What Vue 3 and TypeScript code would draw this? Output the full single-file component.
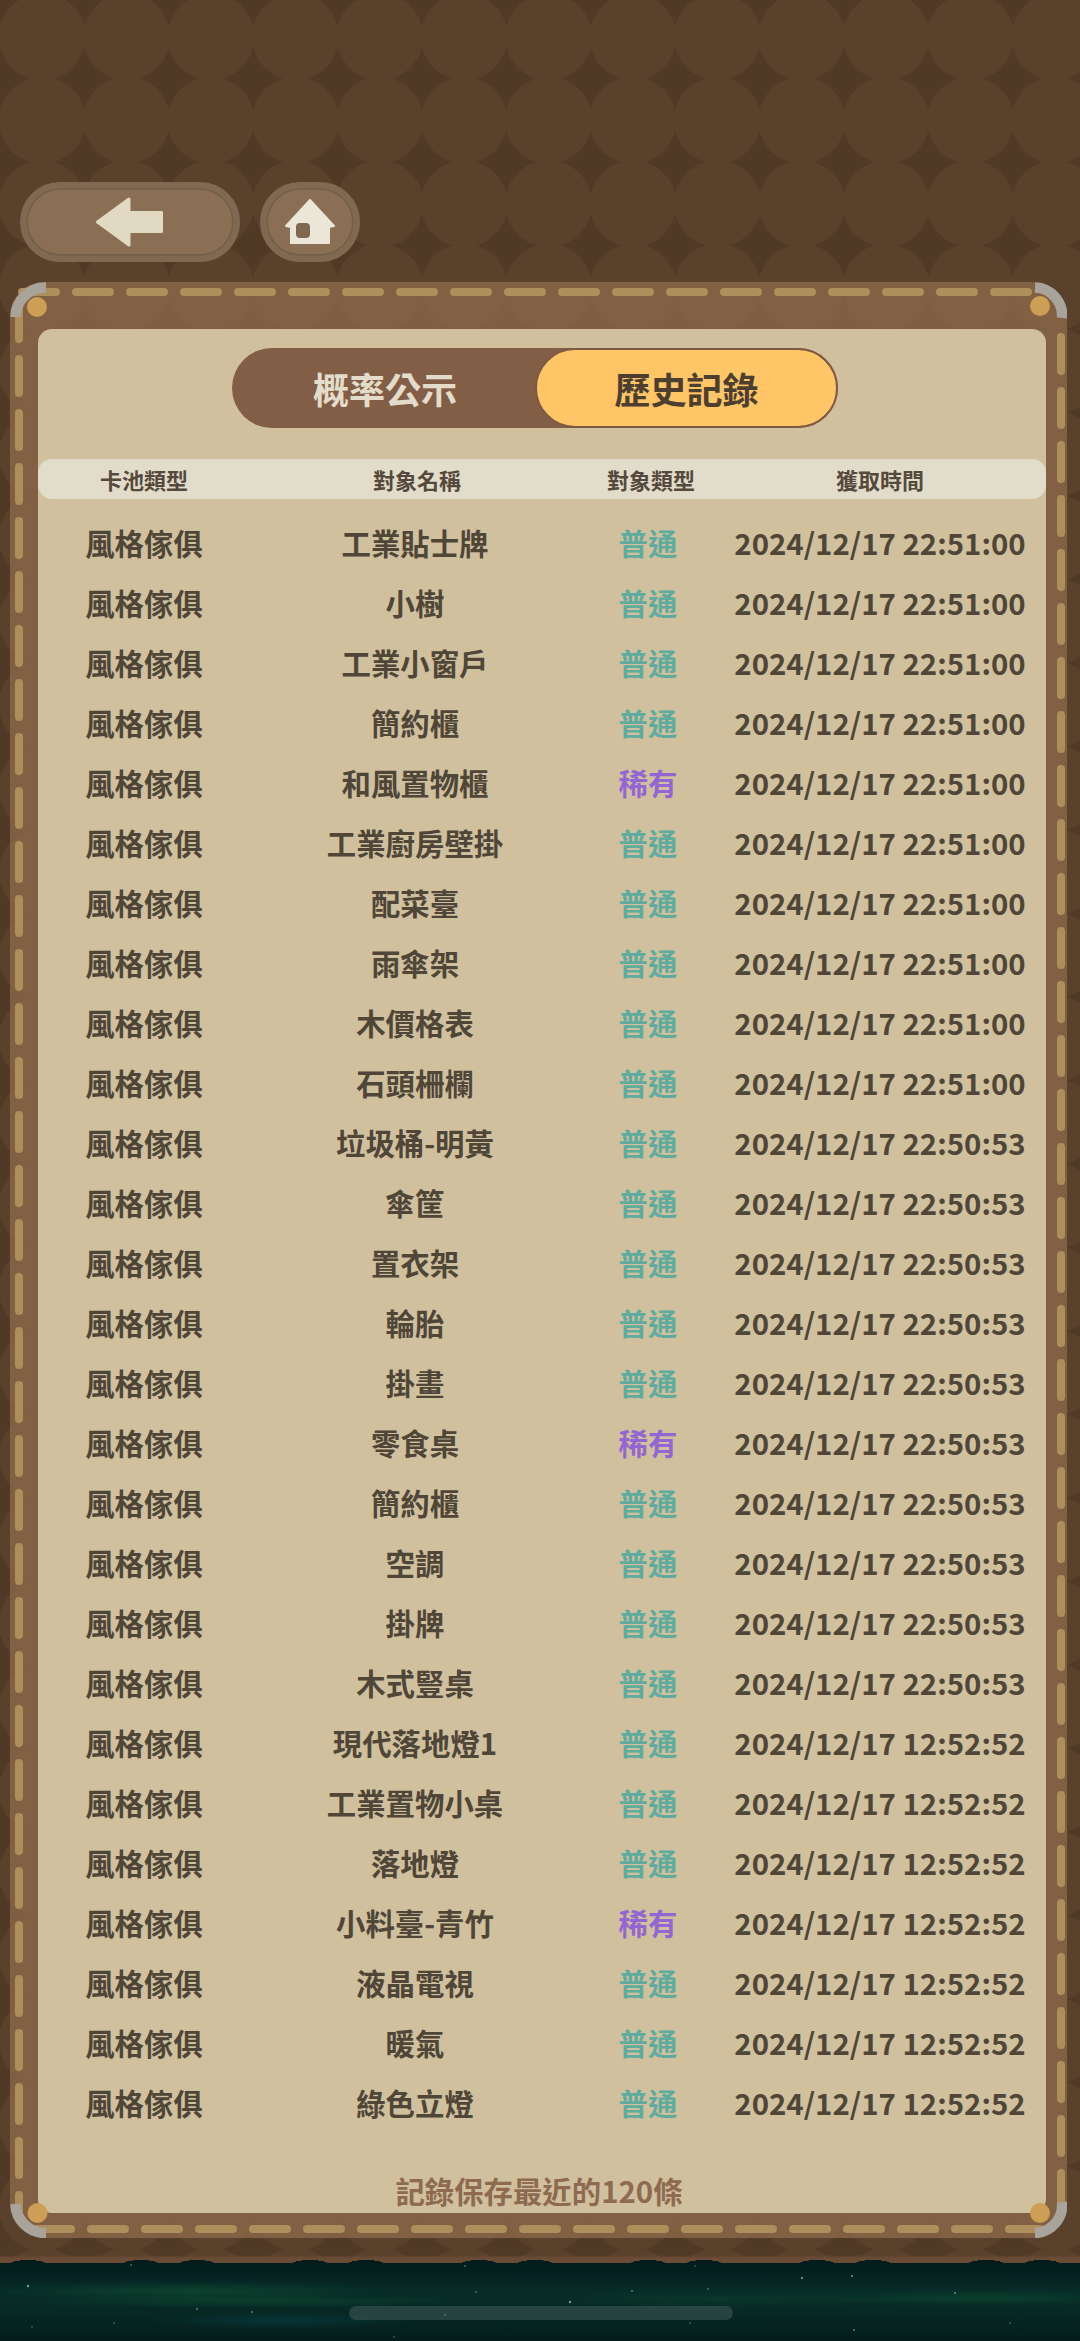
<template>
  <div class="page">
    <div class="wood">
      <div class="nav">
        <button class="nav-btn back">
          <svg width="70" height="52" viewBox="95 195 70 52">
            <path d="M129 198 L97.5 221 L129 244 Z M129 211.500 H161.500 V230.500 H129 Z" fill="#e2d9c3" stroke="#e2d9c3" stroke-width="3" stroke-linejoin="round" />
          </svg>
        </button>
        <button class="nav-btn home">
          <svg width="52" height="46" viewBox="283 198 52 46">
            <path d="M309 199 L333 225 L328 226 V242 H290 V226 L285 225 Z" fill="#ebe6d8" stroke="#ebe6d8" stroke-width="2" stroke-linejoin="round" />
            <rect x="295" y="222" width="14" height="15" rx="4" fill="#7e6850" />
          </svg>
        </button>
      </div>

      <div class="frame">
        <div class="panel">
          <div class="tabs">
            <div class="tab first">概率公示</div>
            <div class="tab active">歷史記錄</div>
          </div>
          <div class="grid header">
            <span>卡池類型</span>
            <span>對象名稱</span>
            <span>對象類型</span>
            <span>獲取時間</span>
          </div>
          <div class="rows">
            <div v-for="(row, index) in rows" :key="index" class="grid row">
              <span>風格傢俱</span>
              <span>{{ row.name }}</span>
              <span :class="row.rare ? 'rare' : 'common'">{{ row.rare ? '稀有' : '普通' }}</span>
              <span>{{ row.time }}</span>
            </div>
          </div>
          <div class="foot">記錄保存最近的120條</div>
        </div>

        <!-- stitching and metal corners sit over the frame edge -->
        <svg class="trim" width="1057" height="1956" viewBox="10 282 1057 1956">
          <g stroke="#ae8f5b" stroke-width="8" stroke-linecap="round" stroke-dasharray="34 20" fill="none">
            <line x1="22" y1="292" x2="1028" y2="292" />
            <line x1="37" y1="2229" x2="1040" y2="2229" />
            <line x1="19" y1="305" x2="19" y2="2210" />
            <line x1="1061" y1="337" x2="1061" y2="2207" />
          </g>
          <g fill="#cd9e55">
            <circle cx="37" cy="307" r="10" />
            <circle cx="1040" cy="306" r="10" />
            <circle cx="37.500" cy="2213" r="10" />
            <circle cx="1040" cy="2213" r="10" />
          </g>
          <g stroke="#a8a49c" stroke-width="10.500" fill="none">
            <path d="M15.500 317 A30 30 0 0 1 46 287.500" />
            <path d="M1035 287.500 A28 28 0 0 1 1062 318" />
            <path d="M15.500 2204 A30 30 0 0 0 46 2233" />
            <path d="M1062 2202 A28 28 0 0 1 1035 2233" />
          </g>
        </svg>
      </div>
    </div>

    <div class="scene">
      <svg class="stars" width="1080" height="78" viewBox="0 0 1080 78">
        <circle v-for="(s, i) in stars" :key="i" :cx="s[0]" :cy="s[1]" :r="s[2]" fill="#9fd8cc" :opacity="s[3]" />
      </svg>
      <div class="indicator"></div>
    </div>
  </div>
</template>

<script setup lang="ts">
const names = [
  '工業貼士牌', '小樹', '工業小窗戶', '簡約櫃', '和風置物櫃', '工業廚房壁掛', '配菜臺', '雨傘架', '木價格表',
  '石頭柵欄', '垃圾桶-明黃', '傘筐', '置衣架', '輪胎', '掛畫', '零食桌', '簡約櫃', '空調', '掛牌', '木式豎桌',
  '現代落地燈1', '工業置物小桌', '落地燈', '小料臺-青竹', '液晶電視', '暖氣', '綠色立燈',
]
const rareRows = [4, 15, 23]

const timeFor = (i: number) => {
  if (i < 10) return '2024/12/17 22:51:00'
  if (i < 20) return '2024/12/17 22:50:53'
  return '2024/12/17 12:52:52'
}

const rows = names.map((name, i) => ({
  name,
  rare: rareRows.includes(i),
  time: timeFor(i),
}))

const stars: number[][] = [
  [28, 23, 1.2, 0.7], [802, 15, 1.2, 0.6], [852, 13, 1, 0.7], [570, 39, 1.2, 0.7],
  [476, 29, 1, 0.4], [632, 28, 1, 0.5], [955, 30, 1, 0.6], [197, 46, 1, 0.5],
  [252, 49, 1, 0.5], [854, 67, 1, 0.5], [394, 74, 1, 0.3], [114, 60, 1, 0.3],
  [1010, 60, 1, 0.3], [690, 60, 1, 0.3], [445, 52, 1, 0.3], [708, 26, 1, 0.4],
  [32, 64, 1, 0.3], [131, 2, 1, 0.4], [465, 3, 1, 0.4], [695, 3, 1, 0.3],
]
</script>

<style scoped>
.page {
  width: 1080px;
  height: 2341px;
  overflow: hidden;
  font-family: "Noto Sans CJK TC", "Noto Sans", sans-serif;
  font-weight: 700;
  color: #4f4638;
}

.wood {
  height: 2263px;
  box-sizing: border-box;
  padding: 182px 0 0;
  background-color: #503a25;
  background-image:
    linear-gradient(transparent, #6a4b35 3px),
    radial-gradient(circle at center, #5a412c 0, #5a412c 43px, transparent 43.700px);
  background-repeat: no-repeat, repeat;
  background-size: 100% 8px, 84.400px 83.500px;
  background-position: 0 100%, 0 -5px;
}

.nav {
  display: flex;
  gap: 20px;
  padding-left: 20px;
}

.nav-btn {
  height: 80px;
  padding: 0;
  display: flex;
  align-items: center;
  justify-content: center;
  box-sizing: border-box;
  background: #8a6f54;
  border: 6px solid #806950;
  border-radius: 40px;
  box-shadow: inset 0 0 0 2px #75604a;
}

.back {
  width: 220px;
}

.home {
  width: 100px;
}

.frame {
  position: relative;
  width: 1057px;
  height: 1956px;
  margin: 20px 0 0 10px;
  box-sizing: border-box;
  padding: 47px 21px 25px 28px;
  background: rgba(146, 108, 76, 0.72);
  border-radius: 34px;
}

.panel {
  height: 100%;
  box-sizing: border-box;
  padding-top: 19px;
  display: flex;
  flex-direction: column;
  background: #d0c09e;
  border-radius: 14px;
}

.tabs {
  width: 606px;
  height: 80px;
  margin-left: 194px;
  display: flex;
  background: #835e47;
  border-radius: 40px;
}

.tab {
  flex: 0 0 50%;
  box-sizing: border-box;
  display: flex;
  align-items: center;
  justify-content: center;
  font-size: 36px;
  color: #e4dccb;
  border-radius: 40px;
}

.tab.first {
  padding-left: 3px;
}

.tab.active {
  background: #ffc566;
  border: 2px solid #7e5a42;
  color: #4c3f30;
}

.grid {
  display: grid;
  grid-template-columns: 212px 330px 136px 328px;
  text-align: center;
  align-items: center;
}

.header {
  height: 40px;
  margin-top: 31px;
  background: #e2dcca;
  border-radius: 14px;
  font-size: 22px;
  color: #55493c;
}

.header span:nth-child(2) {
  padding-left: 4px;
}

.header span:nth-child(3) {
  padding-left: 6px;
}

.rows {
  margin-top: 16px;
}

.row {
  height: 60px;
  box-sizing: border-box;
  padding-bottom: 6px;
  font-size: 29.400px;
  white-space: nowrap;
}

.common {
  color: #5fab9e;
}

.rare {
  color: #9366d2;
}

.foot {
  margin-top: auto;
  height: 40px;
  padding: 0 6px 3px 0;
  line-height: 40px;
  text-align: center;
  font-size: 29.400px;
  color: #8d6a50;
}

.trim {
  position: absolute;
  left: 0;
  top: 0;
}

.scene {
  position: relative;
  height: 78px;
  background-color: #05211e;
  background-image:
    radial-gradient(ellipse 200px 10px at 190px 28px, rgba(16, 84, 52, 0.55), transparent),
    radial-gradient(ellipse 240px 7px at 250px 38px, rgba(14, 84, 50, 0.5), transparent),
    radial-gradient(ellipse 180px 10px at 720px 36px, rgba(14, 70, 46, 0.45), transparent),
    radial-gradient(ellipse 180px 8px at 980px 35px, rgba(14, 80, 50, 0.55), transparent),
    radial-gradient(ellipse 130px 9px at 280px 58px, rgba(10, 62, 72, 0.6), transparent),
    linear-gradient(#031c1c 0, #041f1f 12%, #072c27 35%, #062823 65%, #041c1a 100%);
}

.scene::before {
  content: "";
  position: absolute;
  left: 0;
  right: 0;
  top: -3px;
  height: 4px;
  background-image:
    radial-gradient(ellipse 18px 4px at 28px 4px, #041c1c 98%, transparent),
    radial-gradient(ellipse 18px 4px at 141px 4px, #041c1c 98%, transparent);
  background-size: 169px 4px;
}

.stars {
  position: absolute;
  left: 0;
  top: 0;
}

.indicator {
  position: absolute;
  left: 349px;
  top: 43px;
  width: 384px;
  height: 14px;
  border-radius: 7px;
  background: rgba(255, 255, 255, 0.13);
}
</style>

<style>
body {
  background: #05211e;
}
</style>
